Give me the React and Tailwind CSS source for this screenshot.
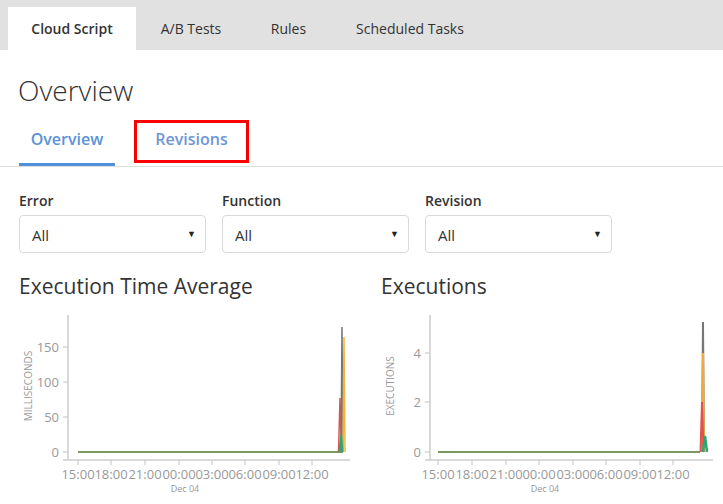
import React from "react";

const font = { fontFamily: '"Open Sans", "Liberation Sans", sans-serif' };

function Select({ label }) {
  return (
    <div className="w-[187px]">
      <div className="text-[14px] font-semibold text-[#333] leading-[20px]">{label}</div>
      <div className="mt-[4px] h-[38px] border border-[#d9d9d9] rounded-[4px] flex items-center justify-between pl-[12px] pr-[9px]">
        <span className="text-[15px] text-[#333] pt-[3px]">All</span>
        <span className="text-[9px] text-[#222]">▼</span>
      </div>
    </div>
  );
}

const grid = "#cccccc";
const label = "#999999";

function TimeChart({ ticks, yTicks, yTitle, spikes, lineEnd, axisEnd }) {
  return (
    <svg width="340" height="190" className="block">
      <line x1="49" y1="5" x2="49" y2="150" stroke={grid} strokeWidth="1.5" />
      <line x1="44" y1="150" x2={axisEnd} y2="150" stroke={grid} strokeWidth="1.5" />
      {ticks.map((x) => (
        <line key={x} x1={x} y1="150" x2={x} y2="155" stroke={grid} strokeWidth="1.2" />
      ))}
      {yTicks.map(([v, y]) => (
        <g key={v}>
          <line x1="44" y1={y} x2="49" y2={y} stroke={grid} strokeWidth="1.2" />
          <text x="40" y={y + 5} textAnchor="end" fontSize="13" fill={label} style={font}>
            {v}
          </text>
        </g>
      ))}
      {["15:00", "18:00", "21:00", "00:00", "03:00", "06:00", "09:00", "12:00"].map((t, i) => (
        <text key={t} x={ticks[i]} y="169" textAnchor="middle" fontSize="13" fill={label} style={font}>
          {t}
        </text>
      ))}
      <text x={ticks[3] + 6} y="182" textAnchor="middle" fontSize="9" fill={label} style={font}>
        Dec 04
      </text>
      <text
        transform="translate(13 76) rotate(-90)"
        textAnchor="middle"
        fontSize="10"
        fill={label}
        style={font}
      >
        {yTitle}
      </text>
      <line x1={ticks[0]} y1="142" x2={lineEnd} y2="142" stroke="#7b9862" strokeWidth="2" />
      {spikes.map((s, i) => (
        <polyline
          key={i}
          points={`${s.x - s.w},142 ${s.x},${s.top} ${s.x + s.w},142`}
          fill="none"
          stroke={s.c}
          strokeWidth={s.sw || 1.5}
          opacity={s.o || 1}
        />
      ))}
    </svg>
  );
}

export default function App() {
  const leftTicks = [59, 92, 126, 160, 193, 226, 260, 293];
  const rightTicks = [57, 91, 125, 158, 192, 225, 259, 292];
  return (
    <div className="w-[723px] h-[504px] bg-white overflow-hidden text-[#333]" style={font}>
      <div className="h-[50px] bg-[#e1e1e1] flex items-end pl-[8px]">
        <div className="h-[43px] w-[128px] bg-white flex items-center justify-center text-[14px] font-semibold text-[#333] pb-[1px]">
          Cloud Script
        </div>
        <div className="h-[43px] w-[110px] flex items-center justify-center text-[14px] text-[#333] pb-[1px]">
          A/B Tests
        </div>
        <div className="h-[43px] w-[85px] flex items-center justify-center text-[14px] text-[#333] pb-[1px]">
          Rules
        </div>
        <div className="h-[43px] w-[158px] flex items-center justify-center text-[14px] text-[#333] pb-[1px]">
          Scheduled Tasks
        </div>
      </div>

      <h1 className="pl-[18px] pt-[22px] text-[28px] font-light leading-[36px] text-[#333]">Overview</h1>

      <div className="mt-[12px] border-b border-[#dddddd] flex items-end pl-[19px]">
        <div className="w-[96px] h-[44px] flex items-center justify-center border-b-[3px] border-[#4f90db] text-[16px] font-semibold text-[#5b93d8] pb-[7px]">
          Overview
        </div>
        <div className="ml-[19px] mb-[3px] w-[115px] h-[43px] border-[3px] border-[#ff0000] flex items-center justify-center text-[16px] font-semibold text-[#6c97d6] pb-[6px]">
          Revisions
        </div>
      </div>

      <div className="flex gap-[16px] pl-[19px] mt-[24px]">
        <Select label="Error" />
        <Select label="Function" />
        <Select label="Revision" />
      </div>

      <div className="flex pl-[19px] mt-[19px]">
        <div className="w-[362px]">
          <div className="text-[21px] leading-[28px] text-[#333]">Execution Time Average</div>
          <div className="mt-[10px]">
            <TimeChart
              ticks={leftTicks}
              yTicks={[["150", 37], ["100", 72], ["50", 107], ["0", 142]]}
              yTitle="MILLISECONDS"
              lineEnd={324}
              axisEnd={331}
              spikes={[
                { x: 321, top: 88, w: 1.5, c: "#e0534a" },
                { x: 323, top: 17, w: 1, c: "#777777" },
                { x: 325, top: 27, w: 1, c: "#f7b538" },
                { x: 322, top: 125, w: 1.5, c: "#2aa772", sw: 2 },
              ]}
            />
          </div>
        </div>
        <div className="w-[342px]">
          <div className="text-[21px] leading-[28px] text-[#333]">Executions</div>
          <div className="mt-[10px]">
            <TimeChart
              ticks={rightTicks}
              yTicks={[["4", 43], ["2", 92], ["0", 142]]}
              yTitle="EXECUTIONS"
              lineEnd={319}
              axisEnd={332}
              spikes={[
                { x: 322, top: 12, w: 1, c: "#777777", sw: 2 },
                { x: 322, top: 43, w: 1, c: "#f2a93b", sw: 2 },
                { x: 321, top: 92, w: 1.5, c: "#e0534a", sw: 2 },
                { x: 324, top: 126, w: 2, c: "#2aa772", sw: 2.5 },
              ]}
            />
          </div>
        </div>
      </div>
    </div>
  );
}
